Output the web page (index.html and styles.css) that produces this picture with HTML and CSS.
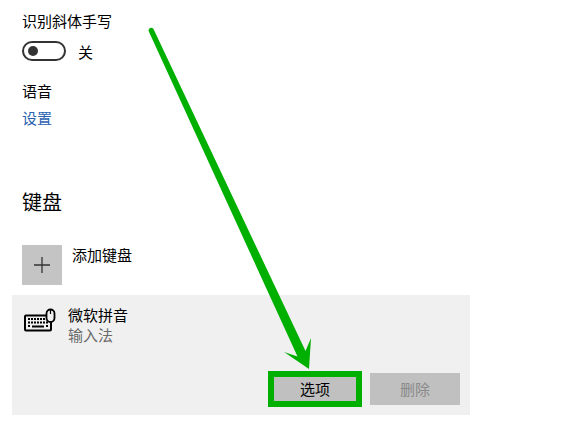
FILE: index.html
```html
<!DOCTYPE html>
<html lang="zh">
<head>
<meta charset="utf-8">
<title>键盘设置</title>
<link rel="stylesheet" href="styles.css">
</head>
<body>
<main class="page">
  <div class="label label-first">识别斜体手写</div>
  <div class="toggle-row">
    <span class="toggle"><span class="knob"></span></span>
    <span class="toggle-text">关</span>
  </div>
  <div class="label label-speech">语音</div>
  <a class="link">设置</a>
  <h2 class="heading">键盘</h2>
  <div class="add-row">
    <span class="add-box">
      <svg width="16" height="16" viewBox="0 0 16 16"><path d="M8 0V16M0 8H16" stroke="#333" stroke-width="1.3" fill="none"/></svg>
    </span>
    <span class="add-text">添加键盘</span>
  </div>
  <section class="kb-card">
    <div class="kb-info">
      <svg class="kb-icon" width="34" height="26" viewBox="0 0 34 26">
        <path d="M24 7.5H3a1 1 0 0 0-1 1V21.5a1 1 0 0 0 1 1H27a1 1 0 0 0 1-1V14" fill="none" stroke="#000" stroke-width="2"/>
        <rect x="23.5" y="1.5" width="8" height="12.5" rx="4" fill="#f0f0f0" stroke="#000" stroke-width="1.8"/>
        <path d="M27.5 1.5V6" stroke="#000" stroke-width="1.2"/>
        <path d="M5 11H23M5 14.5H25" stroke="#000" stroke-width="1.8" stroke-dasharray="2 1" fill="none"/>
        <path d="M5 18H7M9 18.5H21M23 18H25" stroke="#000" stroke-width="1.8" fill="none"/>
      </svg>
      <div class="kb-text">
        <div class="kb-name">微软拼音</div>
        <div class="kb-type">输入法</div>
      </div>
    </div>
    <div class="kb-actions">
      <button class="btn btn-options">选项</button>
      <button class="btn btn-disabled">删除</button>
    </div>
  </section>
</main>
<svg class="arrow" width="582" height="435" viewBox="0 0 582 435">
  <path d="M148.6 31A2.7 2.7 0 0 1 153.5 29L305.5 351L311 338L309 369L284 352L297.5 356.5Z" fill="#00b000"/>
</svg>
</body>
</html>
```

FILE: styles.css
```css
* { box-sizing: border-box; }
html, body { margin: 0; padding: 0; }
body {
  width: 582px;
  height: 435px;
  overflow: hidden;
  background: #fff;
  position: relative;
  font-family: "Noto Sans CJK SC", "Liberation Sans", sans-serif;
  font-size: 15px;
  color: #000;
}
.page { padding: 11px 0 0 22px; width: 470px; }
.label { line-height: 20px; height: 20px; }
.toggle-row { display: flex; align-items: center; margin-top: 10px; height: 20px; }
.toggle {
  width: 44px; height: 20px;
  border: 2px solid #333; border-radius: 10px;
  display: flex; align-items: center; padding-left: 4px;
}
.knob { width: 10px; height: 10px; border-radius: 50%; background: #333; }
.toggle-text { margin-left: 12px; }
.label-speech { margin-top: 20px; }
.link { display: block; margin-top: 7px; line-height: 20px; color: #2a62b0; }
.heading {
  margin: 60px 0 0; font-size: 20px; font-weight: 400;
  line-height: 28px;
}
.add-row { display: flex; margin-top: 29px; height: 40px; }
.add-box {
  width: 40px; height: 40px; background: #c4c4c4;
  display: flex; align-items: center; justify-content: center;
}
.add-text { margin-left: 10px; line-height: 20px; }
.kb-card {
  margin: 10px 0 0 -10px; width: 458px; height: 120px;
  background: #f0f0f0;
  padding: 10px 10px 10px 11px;
  display: flex; flex-direction: column; justify-content: space-between;
}
.kb-info { display: flex; }
.kb-icon { margin-top: 3px; flex: none; }
.kb-text { margin-left: 11px; }
.kb-name { line-height: 20px; }
.kb-type { line-height: 20px; color: #6a6a6a; }
.kb-actions { display: flex; justify-content: flex-end; gap: 10px; }
.btn {
  width: 90px; height: 32px; border: 0; padding: 0 0 2px;
  background: #c0c0c0; font: inherit; color: #000;
}
.btn-options { outline: 2px solid #00b000; box-shadow: inset 0 0 0 4px #00b000; }
.btn-disabled { color: #8a8a8a; }
.arrow { position: absolute; left: 0; top: 0; pointer-events: none; }
```
